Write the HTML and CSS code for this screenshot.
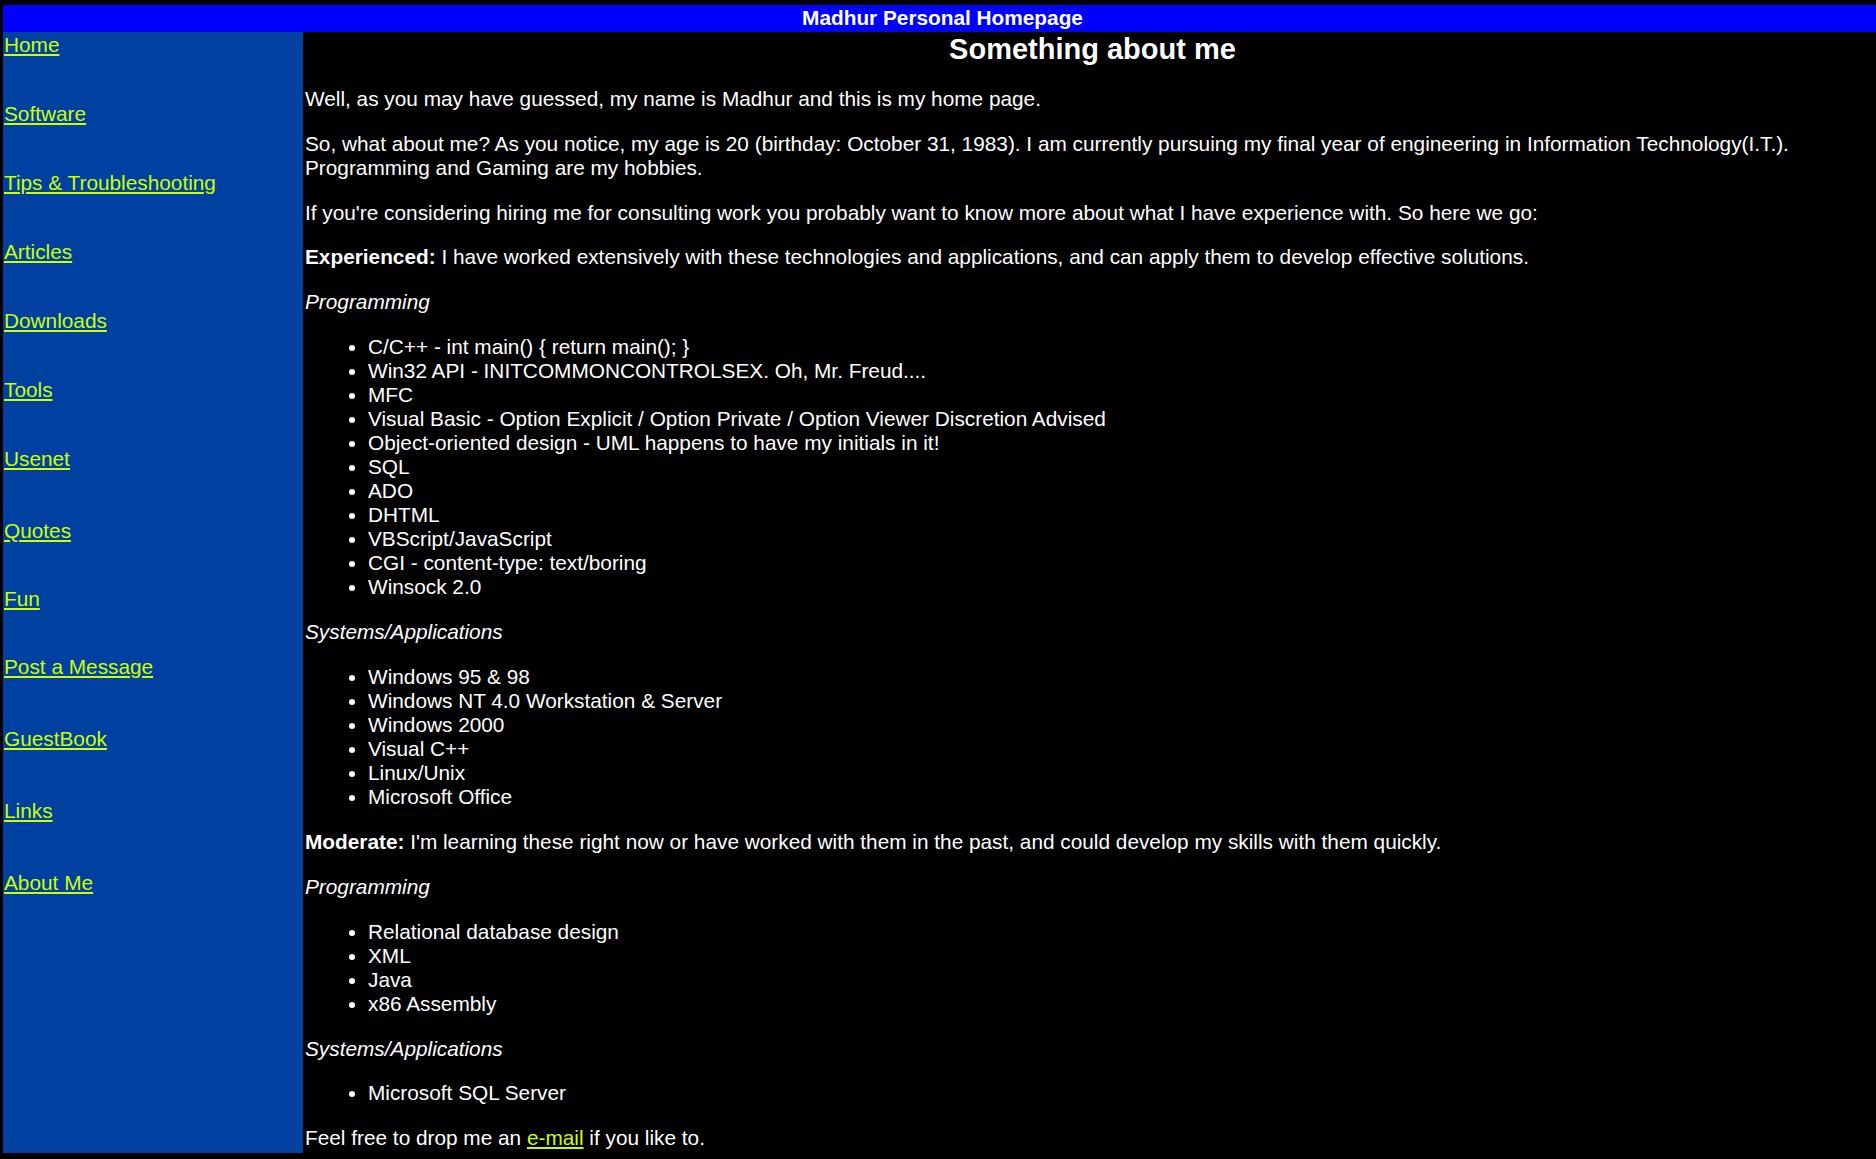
FILE: index.html
```html
<!DOCTYPE html>
<html lang="en">
<head>
<meta charset="utf-8">
<title>Madhur Personal Homepage</title>
<link rel="stylesheet" href="styles.css">
</head>
<body>
<div class="page">
  <header class="banner">Madhur Personal Homepage</header>
  <div class="layout">
    <nav class="sidebar">
      <div class="nav-item"><a href="#">Home</a></div>
      <div class="nav-item"><a href="#">Software</a></div>
      <div class="nav-item"><a href="#">Tips &amp; Troubleshooting</a></div>
      <div class="nav-item"><a href="#">Articles</a></div>
      <div class="nav-item"><a href="#">Downloads</a></div>
      <div class="nav-item"><a href="#">Tools</a></div>
      <div class="nav-item"><a href="#">Usenet</a></div>
      <div class="nav-item far"><a href="#">Quotes</a></div>
      <div class="nav-item near"><a href="#">Fun</a></div>
      <div class="nav-item near"><a href="#">Post a Message</a></div>
      <div class="nav-item far"><a href="#">GuestBook</a></div>
      <div class="nav-item far"><a href="#">Links</a></div>
      <div class="nav-item far"><a href="#">About Me</a></div>
    </nav>
    <main class="content">
      <h1 class="title">Something about me</h1>
      <p>Well, as you may have guessed, my name is Madhur and this is my home page.</p>
      <p>So, what about me? As you notice, my age is 20 (birthday: October 31, 1983). I am currently pursuing my final year of engineering in Information Technology(I.T.). Programming and Gaming are my hobbies.</p>
      <p>If you're considering hiring me for consulting work you probably want to know more about what I have experience with. So here we go:</p>
      <p><strong>Experienced:</strong> I have worked extensively with these technologies and applications, and can apply them to develop effective solutions.</p>
      <p><em>Programming</em></p>
      <ul class="list">
        <li>C/C++ - int main() { return main(); }</li>
        <li>Win32 API - INITCOMMONCONTROLSEX. Oh, Mr. Freud....</li>
        <li>MFC</li>
        <li>Visual Basic - Option Explicit / Option Private / Option Viewer Discretion Advised</li>
        <li>Object-oriented design - UML happens to have my initials in it!</li>
        <li>SQL</li>
        <li>ADO</li>
        <li>DHTML</li>
        <li>VBScript/JavaScript</li>
        <li>CGI - content-type: text/boring</li>
        <li>Winsock 2.0</li>
      </ul>
      <p><em>Systems/Applications</em></p>
      <ul class="list">
        <li>Windows 95 &amp; 98</li>
        <li>Windows NT 4.0 Workstation &amp; Server</li>
        <li>Windows 2000</li>
        <li>Visual C++</li>
        <li>Linux/Unix</li>
        <li>Microsoft Office</li>
      </ul>
      <p><strong>Moderate:</strong> I'm learning these right now or have worked with them in the past, and could develop my skills with them quickly.</p>
      <p><em>Programming</em></p>
      <ul class="list">
        <li>Relational database design</li>
        <li>XML</li>
        <li>Java</li>
        <li>x86 Assembly</li>
      </ul>
      <p><em>Systems/Applications</em></p>
      <ul class="list">
        <li>Microsoft SQL Server</li>
      </ul>
      <p class="last">Feel free to drop me an <a href="#">e-mail</a> if you like to.</p>
    </main>
  </div>
</div>
</body>
</html>
```

FILE: styles.css
```css
html, body {
  margin: 0;
  background: #000;
}

body {
  color: #fff;
  font-family: "Liberation Sans", Arial, sans-serif;
  font-size: 20.8px;
}

a {
  color: #ccff00;
  text-decoration: underline;
}

.page {
  padding: 5px 0 7px 3px;
}

.banner {
  background: #0000ff;
  color: #fff;
  font-weight: bold;
  text-align: center;
  padding: 1px 0 2px 6px;
}

.layout {
  display: flex;
  align-items: stretch;
}

.sidebar {
  width: 298px;
  flex: 0 0 298px;
  padding: 1px;
  background: #0040a0;
  display: flex;
  flex-direction: column;
}

.nav-item + .nav-item {
  margin-top: 45px;
}

.nav-item.far {
  margin-top: 48px;
}

.nav-item.near {
  margin-top: 44px;
}

.content {
  flex: 1;
  padding: 1px 2px 3px;
  min-width: 0;
}

.title {
  font-size: 29px;
  font-weight: bold;
  text-align: center;
  margin: 0 0 20.8px;
  padding-left: 6px;
}

.content p {
  margin: 20.9px 0;
}

.content .title + p {
  margin-top: 0;
}

.content p.last {
  margin-bottom: 0;
}

.list {
  margin: 20.9px 0;
  padding-left: 63px;
}
```
